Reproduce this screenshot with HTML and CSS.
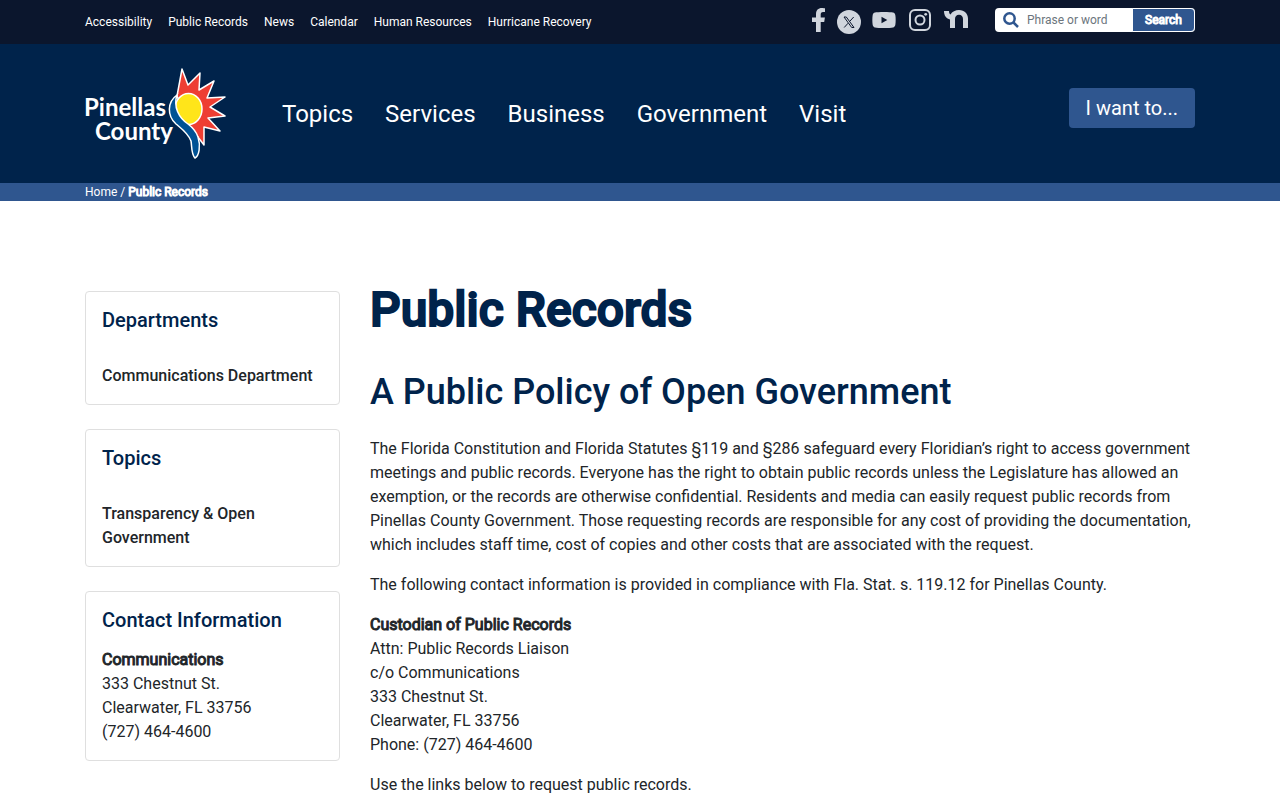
FILE: index.html
```html
<!DOCTYPE html>
<html lang="en">
<head>
<meta charset="utf-8">
<meta name="viewport" content="width=device-width, initial-scale=1">
<title>Public Records - Pinellas County</title>
<link rel="stylesheet" href="styles.css">
</head>
<body>
<div class="topbar">
  <div class="container topbar-row">
    <nav class="quick-links" aria-label="Quick links">
      <a href="#">Accessibility</a>
      <a href="#">Public Records</a>
      <a href="#">News</a>
      <a href="#">Calendar</a>
      <a href="#">Human Resources</a>
      <a href="#">Hurricane Recovery</a>
    </nav>
    <div class="topbar-tools">
      <div class="social">
        <a href="#" aria-label="Facebook"><svg width="14" height="24" viewBox="0 0 14 24"><path d="M4 24V14H0V9.600H4V6.200C4 2.200 6.300 0 9.800 0C11.400 0 13 .3 13 .3V4.100H11.100C9.300 4.100 8.700 5.200 8.700 6.400V9.600H12.900L12.200 14H8.700V24Z"/></svg></a>
        <a href="#" aria-label="X"><svg width="24" height="28" viewBox="0 0 24 28"><circle cx="12" cy="16" r="12"/><path class="x-mark" d="M7 11H9.300L17 21.500H14.700Z M16.700 11L12.900 15.200 M11.100 17.200L7.200 21.500"/></svg></a>
        <a href="#" aria-label="YouTube"><svg width="24" height="24" viewBox="0 0 24 24"><path fill-rule="evenodd" d="M12 4C16 4 19.800 4.200 21 4.500C22.200 4.800 23 5.700 23.300 7C23.800 9.500 23.800 14.500 23.300 17C23 18.300 22.200 19.200 21 19.500C18 20.200 6 20.200 3 19.500C1.800 19.200 1 18.300.7 17C.2 14.500.2 9.500.7 7C1 5.700 1.800 4.800 3 4.500C4.200 4.200 8 4 12 4ZM9.500 8.700V15.300L15.300 12Z"/></svg></a>
        <a href="#" aria-label="Instagram"><svg width="24" height="24" viewBox="0 0 24 24"><rect class="line" x="3" y="2" width="20" height="20" rx="5"/><circle class="line" cx="13" cy="12" r="4.500"/><circle cx="18.700" cy="6.300" r="1.400"/></svg></a>
        <a href="#" aria-label="Nextdoor"><svg width="26" height="24" viewBox="0 0 26 24"><path d="M2 3H7C7 5 7.500 6 8.500 6.500C10 3.500 13.500 2 17 2C22.500 2 26 6 26 10.500V20H21V11C21 8.300 19.500 6.700 17 6.700C14.500 6.700 13 8.300 13 11V20H8V11.500C4.500 10.700 2 8 2 3Z"/></svg></a>
      </div>
      <form class="search">
        <svg width="16" height="16" viewBox="0 0 16 16" aria-hidden="true"><circle cx="6.500" cy="6.500" r="5.200"/><path d="M10.500 10.500L15 15"/></svg>
        <input type="text" placeholder="Phrase or word" aria-label="Search phrase or word">
        <button type="button">Search</button>
      </form>
    </div>
  </div>
</div>
<header class="masthead">
  <div class="container masthead-row">
    <a class="logo" href="#" aria-label="Pinellas County home">
      <svg width="142" height="93" viewBox="0 0 142 93">
        <path class="rays" d="M92 29L97 2L103 18L115 6L114 23L129 14L122 31L140 30L125 40L140 49L123 51L135 64L119 60L119 78L103 57Z"/>
        <ellipse class="sun" cx="103.500" cy="42" rx="13.500" ry="15.500"/>
        <path class="wave" d="M92 28C82 35 82 49 91 57C97 62 103 66 106 74C107 79 106 87 110 91C114 89 116 79 113 70C111 64 107 60 103 57C94 51 88 40 92 28Z"/>
        <text class="logo-text" x="-1" y="49">Pinellas</text>
        <text class="logo-text" x="10" y="73">County</text>
      </svg>
    </a>
    <nav class="main-nav" aria-label="Main">
      <a href="#">Topics</a>
      <a href="#">Services</a>
      <a href="#">Business</a>
      <a href="#">Government</a>
      <a href="#">Visit</a>
    </nav>
    <button class="want" type="button">I want to...</button>
  </div>
</header>
<nav class="breadcrumb" aria-label="Breadcrumb">
  <div class="container"><a href="#">Home</a> / <strong>Public Records</strong></div>
</nav>
<div class="container page">
  <aside class="sidebar">
    <section class="card">
      <h2>Departments</h2>
      <a class="card-link" href="#">Communications Department</a>
    </section>
    <section class="card">
      <h2>Topics</h2>
      <a class="card-link" href="#">Transparency &amp; Open Government</a>
    </section>
    <section class="card">
      <h2>Contact Information</h2>
      <p class="address"><strong>Communications</strong><br>333 Chestnut St.<br>Clearwater, FL 33756<br>(727) 464-4600</p>
    </section>
  </aside>
  <main class="content">
    <h1>Public Records</h1>
    <h2>A Public Policy of Open Government</h2>
    <p>The Florida Constitution and Florida Statutes §119 and §286 safeguard every Floridian’s right to access government meetings and public records. Everyone has the right to obtain public records unless the Legislature has allowed an exemption, or the records are otherwise confidential. Residents and media can easily request public records from Pinellas County Government. Those requesting records are responsible for any cost of providing the documentation, which includes staff time, cost of copies and other costs that are associated with the request.</p>
    <p>The following contact information is provided in compliance with Fla. Stat. s. 119.12 for Pinellas County.</p>
    <p><strong>Custodian of Public Records</strong><br>Attn: Public Records Liaison<br>c/o Communications<br>333 Chestnut St.<br>Clearwater, FL 33756<br>Phone: (727) 464-4600</p>
    <p>Use the links below to request public records.</p>
  </main>
</div>
</body>
</html>
```
FILE: styles.css
```css
* { box-sizing: border-box; }
body {
  margin: 0;
  background: #fff;
  color: #212529;
  font: 16px/24px Roboto, "Liberation Sans", sans-serif;
}
a { color: inherit; text-decoration: none; }
button, input { font-family: inherit; }
h1, h2, p { margin: 0; }
strong { font-weight: 400; -webkit-text-stroke: 1px; }
.container {
  width: 100%;
  max-width: 1140px;
  margin: 0 auto;
  padding: 0 15px;
}

.topbar { background: #0b162d; color: #fff; font-size: 12px; }
.topbar-row {
  display: flex;
  align-items: center;
  justify-content: space-between;
  min-height: 44px;
}
.quick-links { display: flex; gap: 16px; }
.topbar-tools { display: flex; align-items: center; gap: 27px; margin-top: -4px; }
.social { display: flex; align-items: center; gap: 11px; }
.social a { display: flex; }
.social svg { fill: #d0d5dd; }
.social .x-mark { fill: none; stroke: #0b162d; stroke-width: 1; }
.social .line { fill: none; stroke: #d0d5dd; stroke-width: 2; }
.search {
  display: flex;
  align-items: center;
  width: 200px;
  height: 24px;
  padding-left: 8px;
  overflow: hidden;
  background: #fff;
  border-radius: 4px;
}
.search svg { flex: none; fill: none; stroke: #2f568f; stroke-width: 2.500; }
.search input {
  flex: 1;
  min-width: 0;
  height: 24px;
  padding: 0 8px;
  border: 0;
  background: none;
  color: #495057;
  font-size: 12px;
  outline: 0;
}
.search input::placeholder { color: #6c757d; }
.search button {
  width: 63px;
  height: 24px;
  padding: 0;
  border: 1px solid #fff;
  border-radius: 0 4px 4px 0;
  background: #2f568f;
  color: #fff;
  font-size: 12px;
  font-weight: 400;
  -webkit-text-stroke: 1px;
}

.masthead { background: #00234b; color: #fff; }
.masthead-row { display: flex; align-items: center; min-height: 139px; }
.logo { display: flex; }
.logo svg { overflow: visible; }
.rays { fill: #ee3e33; stroke: #fff; stroke-width: 1.500; stroke-linejoin: round; }
.sun { fill: #ffe51a; stroke: #fff; stroke-width: 1.500; }
.wave { fill: #005295; stroke: #fff; stroke-width: 1.500; }
.logo-text {
  fill: #fff;
  font-family: Lato, sans-serif;
  font-size: 24px;
  font-weight: 700;
}
.main-nav { display: flex; gap: 32px; margin-left: 55px; font-size: 24px; }
.want {
  height: 40px;
  margin: -12px 0 0 auto;
  padding: 0 17px;
  border: 0;
  border-radius: 4px;
  background: #2f568f;
  color: #fff;
  font-size: 20px;
}

.breadcrumb { background: #2f568f; color: #fff; font-size: 12px; line-height: 18px; }

.page { display: flex; gap: 30px; padding-top: 80px; }
.sidebar {
  display: flex;
  flex: 0 0 255px;
  flex-direction: column;
  gap: 24px;
  padding-top: 10px;
}
.card { padding: 16px; border: 1px solid #dfdfdf; border-radius: 4px; }
.card h2 { margin-bottom: 16px; color: #00234b; font-size: 20px; font-weight: 500; line-height: 24px; }
.card-link { display: block; padding-top: 16px; font-weight: 500; }

.content { flex: 1; min-width: 0; }
.content h1 {
  margin-bottom: 32px;
  color: #00234b;
  font-size: 48px;
  font-weight: 500;
  line-height: 58px;
  -webkit-text-stroke: 2px;
}
.content h2 { margin-bottom: 23px; color: #00234b; font-size: 36px; font-weight: 500; line-height: 43px; }
.content p { margin-bottom: 16px; }
```
